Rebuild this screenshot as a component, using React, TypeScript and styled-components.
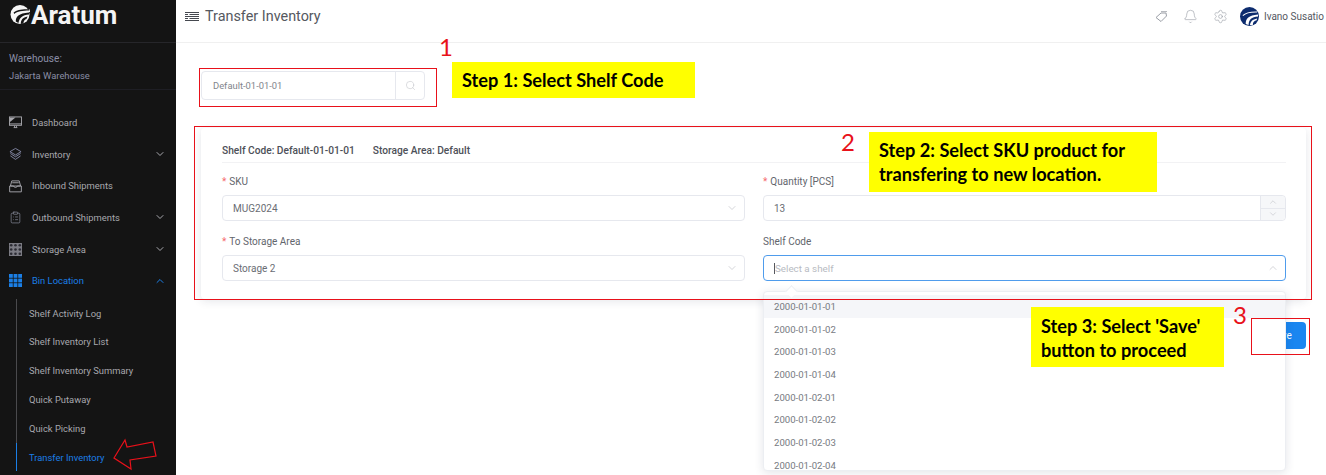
import React from "react";
import styled, { createGlobalStyle } from "styled-components";
import { ClipboardList, ChevronDown, ChevronUp, Bell, Settings, Search } from "lucide-react";

const Global = createGlobalStyle`
  html, body { margin: 0; padding: 0; background: #fff; }
  body { font-family: Roboto, "Liberation Sans", sans-serif; }
  * { box-sizing: border-box; }
`;

const Page = styled.div`
  position: relative;
  display: flex;
  width: 1326px;
  height: 475px;
  overflow: hidden;
`;

const Sidebar = styled.aside`
  width: 176px;
  flex: none;
  background: #141414;
  display: flex;
  flex-direction: column;
`;

const Brand = styled.div`
  height: 43px;
  padding: 1px 0 0 10px;
  display: flex;
  align-items: flex-start;
  gap: 1px;
  border-bottom: 1px solid #26262a;
`;

const BrandName = styled.span`
  font-size: 26px;
  font-weight: 700;
  line-height: 28px;
  color: #f4f4f4;
`;

const Warehouse = styled.div`
  height: 47px;
  padding: 7px 9px 0;
  font-size: 10.1px;
  line-height: 17px;
  color: #8a8ea6;
  border-bottom: 1px solid #1e1e24;
`;

const WarehouseName = styled.div`
  font-size: 9.4px;
`;

const Nav = styled.nav`
  padding-top: 16.5px;
  display: flex;
  flex-direction: column;
`;

const NavItem = styled.div<{ $active?: boolean }>`
  height: 31.7px;
  padding: 0 10px 0 9px;
  display: flex;
  align-items: center;
  gap: 10px;
  font-size: 9.4px;
  color: ${(p) => (p.$active ? "#1b7fe6" : "#a8a8ae")};
  span { flex: 1; }
`;

const IconSlot = styled.div`
  width: 13px;
  height: 14px;
  display: flex;
  align-items: center;
  justify-content: center;
  color: #8f94a6;
`;

const SubList = styled.div`
  position: relative;
  margin: 2px 0 0 16px;
  border-left: 1px solid #4a4a4d;
  display: flex;
  flex-direction: column;
`;

const SubItem = styled.div<{ $active?: boolean }>`
  height: 28.8px;
  margin-left: -1px;
  padding-left: 12px;
  display: flex;
  align-items: center;
  font-size: 9.4px;
  color: ${(p) => (p.$active ? "#1b7fe6" : "#a8a8ae")};
  border-left: 1px solid ${(p) => (p.$active ? "#1b7fe6" : "transparent")};
`;

const Main = styled.main`
  flex: 1;
  min-width: 0;
  display: flex;
  flex-direction: column;
`;

const TopBar = styled.header`
  height: 43px;
  flex: none;
  padding: 0 2px 9px 9px;
  display: flex;
  align-items: center;
  border-bottom: 1px solid #f0f0f0;
`;

const Title = styled.h1`
  margin: 0 0 0 6px;
  flex: 1;
  font-size: 14.4px;
  font-weight: 400;
  color: #555860;
`;

const TopIcons = styled.div`
  display: flex;
  align-items: center;
  gap: 15px;
  color: #9a9ea6;
  margin-right: 12px;
`;

const User = styled.span`
  margin-left: 5px;
  font-size: 10px;
  color: #55585f;
`;

const Content = styled.div`
  position: relative;
  padding: 28px 20px 0 25px;
  display: flex;
  flex-direction: column;
`;

const SearchBox = styled.div`
  width: 224px;
  height: 29px;
  border: 1px solid #e6e8ee;
  border-radius: 4px;
  display: flex;
  align-items: stretch;
`;

const SearchText = styled.div`
  flex: 1;
  padding-left: 11px;
  display: flex;
  align-items: center;
  font-size: 9.4px;
  color: #82858c;
`;

const SearchButton = styled.div`
  width: 29px;
  border-left: 1px solid #e6e8ee;
  display: flex;
  align-items: center;
  justify-content: center;
  color: #c0c2c8;
`;

const Card = styled.section`
  margin-top: 28px;
  height: 171px;
  padding: 0 20px 0 21px;
  border-radius: 4px;
  box-shadow: 0 2px 10px rgba(30, 40, 70, 0.12);
`;

const CardHead = styled.div`
  height: 35px;
  padding-top: 11px;
  display: flex;
  gap: 18px;
  font-size: 10.2px;
  font-weight: 500;
  line-height: 24px;
  color: #4d5058;
  border-bottom: 1px solid #f2f2f4;
`;

const FormGrid = styled.div`
  display: grid;
  grid-template-columns: 523px 523px;
  column-gap: 18px;
`;

const Field = styled.div`
  height: 60px;
  padding-top: 12px;
`;

const Label = styled.div`
  height: 20px;
  font-size: 10px;
  line-height: 14px;
  color: #62656c;
`;

const Star = styled.span`
  color: #f56c6c;
  margin-right: 3px;
`;

const SelectBox = styled.div<{ $focus?: boolean }>`
  position: relative;
  height: 26px;
  padding: 0 6px 0 10px;
  border: 1px solid ${(p) => (p.$focus ? "#4f9cec" : "#e6e8ee")};
  border-radius: 4px;
  display: flex;
  align-items: center;
  justify-content: space-between;
  font-size: 10px;
  color: #6a6d74;
  svg { color: #a8abb2; }
`;

const Placeholder = styled.span`
  color: #b8bbc2;
  font-size: 9.8px;
  border-left: 1px solid #55585f;
`;

const Stepper = styled.div`
  position: absolute;
  top: 0;
  right: 0;
  bottom: 0;
  width: 25px;
  background: #f6f7f9;
  border-left: 1px solid #e6e8ee;
  border-radius: 0 4px 4px 0;
  display: flex;
  flex-direction: column;
  div {
    flex: 1;
    display: flex;
    align-items: center;
    justify-content: center;
  }
  div + div { border-top: 1px solid #e6e8ee; }
`;

const SaveRow = styled.div`
  margin-top: 23px;
  display: flex;
  justify-content: flex-end;
`;

const SaveButton = styled.button`
  width: 50px;
  height: 27px;
  border: 0;
  border-radius: 4px;
  background: #1a86f0;
  color: #fff;
  font: 400 10px Roboto, sans-serif;
`;

const Dropdown = styled.div`
  position: absolute;
  left: 587px;
  top: 248px;
  width: 523px;
  height: 180px;
  background: #fff;
  border: 1px solid #eceef2;
  border-radius: 4px;
  box-shadow: 0 2px 10px rgba(30, 40, 70, 0.12);
  padding-top: 3px;
  overflow: hidden;
`;

const DropCaret = styled.div`
  position: absolute;
  left: 611px;
  top: 244px;
  width: 9px;
  height: 9px;
  background: #fff;
  border: 1px solid #eceef2;
  border-right: 0;
  border-bottom: 0;
  transform: rotate(45deg);
  z-index: 1;
`;

const Option = styled.div<{ $hover?: boolean }>`
  height: 22.7px;
  padding-left: 10px;
  display: flex;
  align-items: center;
  font-size: 9.6px;
  color: #777a81;
  background: ${(p) => (p.$hover ? "#f5f6f9" : "transparent")};
`;

const RedBox = styled.div<{ $x: number; $y: number; $w: number; $h: number }>`
  position: absolute;
  left: ${(p) => p.$x}px;
  top: ${(p) => p.$y}px;
  width: ${(p) => p.$w}px;
  height: ${(p) => p.$h}px;
  border: 1px solid #e8111a;
`;

const WhitePatch = styled.div`
  position: absolute;
  left: 1252px;
  top: 319px;
  width: 29px;
  height: 34px;
  background: #fff;
`;

const Note = styled.div<{ $x: number; $y: number; $w: number; $h: number; $pt?: number }>`
  position: absolute;
  left: ${(p) => p.$x}px;
  top: ${(p) => p.$y}px;
  width: ${(p) => p.$w}px;
  height: ${(p) => p.$h}px;
  padding: ${(p) => p.$pt ?? 0}px 10px 0;
  background: #ffff00;
  display: flex;
  align-items: center;
  font-family: Lato, "Liberation Sans", sans-serif;
  font-weight: 700;
  font-size: 18.2px;
  line-height: 24px;
  color: #000;
`;

const StepNumber = styled.div<{ $x: number; $y: number }>`
  position: absolute;
  left: ${(p) => p.$x}px;
  top: ${(p) => p.$y}px;
  font-family: Lato, "Liberation Sans", sans-serif;
  font-size: 24px;
  line-height: 26px;
  color: #e8111a;
`;

const PointerSvg = styled.svg`
  position: absolute;
  left: 110px;
  top: 437px;
`;

const Logo = () => (
  <svg width="20" height="26" viewBox="0 0 20 26">
    <circle cx="10" cy="13.5" r="9.5" fill="#f4f4f4" />
    <path d="M13 8.5 L20 8.5 L20 11 L14 11Z" fill="#f4f4f4" />
    <path d="M3.6 11.5 C7 8.8 11 8 19 8.2 L19.5 9.6 C12 9.6 7.5 10.4 4.2 13Z" fill="#141414" />
    <path d="M5.8 20.5 C5.6 16 8.6 12.4 19 11.6 L19 13.4 C12.4 14 9.6 16.5 8.4 22Z" fill="#141414" />
    <path d="M10.8 23 C10.8 19 12.6 16.2 17.6 15.4 L16.4 18 C14.6 18.6 13.6 20 13.4 22.6Z" fill="#141414" />
  </svg>
);

const Avatar = () => (
  <svg width="19" height="19" viewBox="0 0 20 20">
    <circle cx="10" cy="10" r="10" fill="#0d2c6e" />
    <path d="M6 18 C6 12 9 9 19 8 L19 10 C12 10.5 9.5 13 9 19Z" fill="#fff" />
    <path d="M10.5 19 C11 15 13 13 18 12 L17.5 14 C15 14.4 13.5 16 13.5 19Z" fill="#fff" />
    <path d="M3 9 C6 6 11 5 18 5.2" stroke="#fff" strokeWidth="1.1" fill="none" />
  </svg>
);

const MenuGlyph = () => (
  <svg width="14" height="12" viewBox="0 0 14 12" fill="none" stroke="#45484f" strokeWidth="1.1">
    <path d="M0 1.5H14M4.5 3.5H14M0 5.5H14M4.5 7.5H14M0 9.5H14" />
    <path d="M0 3.5H3M0 7.5H3" />
  </svg>
);

const MonitorGlyph = () => (
  <svg width="14" height="13" viewBox="0 0 14 13" fill="none" stroke="#a8a8ae" strokeWidth="1">
    <rect x="0.5" y="0.5" width="13" height="9" />
    <path d="M1 1H7L1 6Z" fill="#a8a8ae" stroke="none" />
    <path d="M0.5 8H13.5M5 12H9" />
    <path d="M6 10V12M8 10V12" />
  </svg>
);

const LayersGlyph = () => (
  <svg width="14" height="14" viewBox="0 0 14 14" fill="none" stroke="#8f94b4" strokeWidth="0.9">
    <path d="M7 1 L13 4.5 L7 8 L1 4.5Z" />
    <path d="M1.5 6.5 L7 10 L12.5 6.5" />
    <path d="M1.5 9 L7 12.8 L12.5 9" />
  </svg>
);

const InboxGlyph = () => (
  <svg width="14" height="14" viewBox="0 0 14 14" fill="none" stroke="#a8a8ae" strokeWidth="1">
    <path d="M3 1.5H11L12.5 7H1.5Z" />
    <path d="M3.5 3.5H10.5" />
    <path d="M0.7 7H5C5 9 9 9 9 7H13.3V13.3H0.7Z" />
  </svg>
);

const GridGlyph = () => (
  <svg width="13" height="13" viewBox="0 0 13 13">
    <rect width="13" height="13" fill="#7c7c84" />
    {[2.2, 6.5, 10.8].flatMap((y) =>
      [2.2, 6.5, 10.8].map((x) => <circle key={`${x}-${y}`} cx={x} cy={y} r="1.3" fill="#2c2c34" />)
    )}
  </svg>
);

const BinGlyph = () => (
  <svg width="13" height="13" viewBox="0 0 13 13" fill="#1b7fe6">
    {[0, 4.6, 9.2].flatMap((y) =>
      [0, 4.6, 9.2].map((x) => <rect key={`${x}-${y}`} x={x} y={y} width="3.8" height="3.8" />)
    )}
  </svg>
);

const TagGlyph = () => (
  <svg width="14" height="14" viewBox="0 0 14 14" fill="none" stroke="#9a9ea6" strokeWidth="1">
    <path d="M7 3 L12 3 L12.5 6 L7 11.5 L2 7.5Z" />
    <path d="M7 1.6 L13 1.6" strokeWidth="0.8" />
  </svg>
);

const items = [
  { label: "Dashboard", icon: <MonitorGlyph /> },
  { label: "Inventory", icon: <LayersGlyph />, chevron: true },
  { label: "Inbound Shipments", icon: <InboxGlyph /> },
  { label: "Outbound Shipments", icon: <ClipboardList size={15} strokeWidth={1.2} />, chevron: true },
  { label: "Storage Area", icon: <GridGlyph />, chevron: true },
];

const subItems = ["Shelf Activity Log", "Shelf Inventory List", "Shelf Inventory Summary", "Quick Putaway", "Quick Picking"];
const options = ["2000-01-01-01", "2000-01-01-02", "2000-01-01-03", "2000-01-01-04", "2000-01-02-01", "2000-01-02-02", "2000-01-02-03", "2000-01-02-04"];

export default function App() {
  return (
    <Page>
      <Global />
      <Sidebar>
        <Brand>
          <Logo />
          <BrandName>Aratum</BrandName>
        </Brand>
        <Warehouse>
          Warehouse:
          <WarehouseName>Jakarta Warehouse</WarehouseName>
        </Warehouse>
        <Nav>
          {items.map((it) => (
            <NavItem key={it.label}>
              <IconSlot>{it.icon}</IconSlot>
              <span>{it.label}</span>
              {it.chevron && <ChevronDown size={12} strokeWidth={2} />}
            </NavItem>
          ))}
          <NavItem $active>
            <IconSlot>
              <BinGlyph />
            </IconSlot>
            <span>Bin Location</span>
            <ChevronUp size={12} strokeWidth={2} />
          </NavItem>
          <SubList>
            {subItems.map((s) => (
              <SubItem key={s}>{s}</SubItem>
            ))}
            <SubItem $active>Transfer Inventory</SubItem>
          </SubList>
        </Nav>
      </Sidebar>
      <Main>
        <TopBar>
          <MenuGlyph />
          <Title>Transfer Inventory</Title>
          <TopIcons>
            <TagGlyph />
            <Bell size={15} strokeWidth={1} />
            <Settings size={15} strokeWidth={1} />
          </TopIcons>
          <Avatar />
          <User>Ivano Susatio</User>
        </TopBar>
        <Content>
          <SearchBox>
            <SearchText>Default-01-01-01</SearchText>
            <SearchButton>
              <Search size={11} strokeWidth={1.2} />
            </SearchButton>
          </SearchBox>
          <Card>
            <CardHead>
              <span>Shelf Code: Default-01-01-01</span>
              <span>Storage Area: Default</span>
            </CardHead>
            <FormGrid>
              <Field>
                <Label><Star>*</Star>SKU</Label>
                <SelectBox>MUG2024<ChevronDown size={12} strokeWidth={1} /></SelectBox>
              </Field>
              <Field>
                <Label><Star>*</Star>Quantity [PCS]</Label>
                <SelectBox>
                  13
                  <Stepper>
                    <div><ChevronUp size={10} strokeWidth={1} /></div>
                    <div><ChevronDown size={10} strokeWidth={1} /></div>
                  </Stepper>
                </SelectBox>
              </Field>
              <Field>
                <Label><Star>*</Star>To Storage Area</Label>
                <SelectBox>Storage 2<ChevronDown size={12} strokeWidth={1} /></SelectBox>
              </Field>
              <Field>
                <Label>Shelf Code</Label>
                <SelectBox $focus>
                  <Placeholder>Select a shelf</Placeholder>
                  <ChevronUp size={12} strokeWidth={1} />
                </SelectBox>
              </Field>
            </FormGrid>
          </Card>
          <SaveRow>
            <SaveButton>Save</SaveButton>
          </SaveRow>
          <DropCaret />
          <Dropdown>
            {options.map((o, i) => (
              <Option key={o} $hover={i === 0}>{o}</Option>
            ))}
          </Dropdown>
        </Content>
      </Main>

      <RedBox $x={199} $y={68} $w={238} $h={39} />
      <RedBox $x={194} $y={126} $w={1118} $h={174} />
      <WhitePatch />
      <RedBox $x={1251} $y={318} $w={59} $h={37} />
      <StepNumber $x={439} $y={34}>1</StepNumber>
      <StepNumber $x={841} $y={129}>2</StepNumber>
      <StepNumber $x={1233} $y={302}>3</StepNumber>
      <Note $x={452} $y={62} $w={243} $h={36}>Step 1: Select Shelf Code</Note>
      <Note $x={869} $y={132} $w={288} $h={60}>Step 2: Select SKU product for transfering to new location.</Note>
      <Note $x={1031} $y={307} $w={193} $h={60} $pt={2}>Step 3: Select 'Save' button to proceed</Note>
      <PointerSvg width="50" height="36" viewBox="0 0 50 36">
        <polygon points="4,21 15,3 17,10 43,5 46,19 20,23 21,32" fill="#141414" stroke="#e8111a" strokeWidth="1.2" />
      </PointerSvg>
    </Page>
  );
}
